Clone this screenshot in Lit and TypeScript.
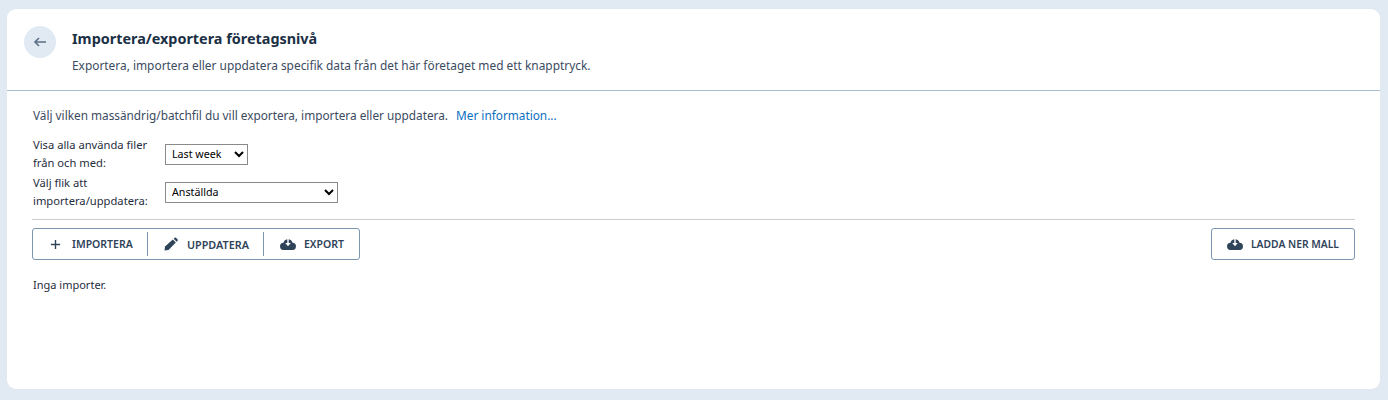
import { LitElement, html, css } from "lit";

const cloudIcon = html`
  <svg class="icon" viewBox="0 0 16 12" aria-hidden="true">
    <path d="M3.800 12a3.600 3.600 0 0 1-.3-7.200 4.600 4.600 0 0 1 9 0 3.600 3.600 0 0 1-.3 7.200z"></path>
    <path class="cut" d="M7.300 0h1.400v5h2.100L8 8.200 5.200 5h2.100z"></path>
  </svg>
`;

const pencilIcon = html`
  <svg class="icon pencil" viewBox="0 0 14 14" aria-hidden="true">
    <path d="M8.800 2.600l3 3L4.500 13l-4 .5.5-4z"></path>
    <path d="M9.700 1.700l.9-.9a1 1 0 0 1 1.400 0l1.600 1.600a1 1 0 0 1 0 1.400l-.9.9z"></path>
  </svg>
`;

const plusIcon = html`
  <svg class="icon plus" viewBox="0 0 12 12" aria-hidden="true">
    <path d="M6 1v10M1 6h10"></path>
  </svg>
`;

export class AppRoot extends LitElement {
  static styles = css`
    :host {
      display: block;
      background: #e1e9f3;
      padding: 9px 8px 11px 7px;
      font-family: "Noto Sans", "Open Sans", sans-serif;
      color: #3b4b5f;
    }
    .card {
      background: #fff;
      border-radius: 9px;
      height: 380px;
    }
    header {
      display: flex;
      gap: 16px;
      height: 82px;
      padding: 17px 0 0 17px;
      box-sizing: border-box;
      border-bottom: 1px solid #a9bccf;
    }
    .back {
      width: 32px;
      height: 32px;
      border-radius: 50%;
      background: #e1e9f3;
      display: flex;
      align-items: center;
      justify-content: center;
    }
    .back svg {
      width: 14px;
      height: 12px;
      fill: none;
      stroke: #5a6f87;
      stroke-width: 1.6;
    }
    h1 {
      margin: 1px 0 0;
      font-size: 14.4px;
      line-height: 24px;
      font-weight: 700;
      color: #1b2f45;
    }
    .sub {
      margin: 5px 0 0;
      font-size: 11.9px;
      line-height: 18px;
    }
    .content {
      padding: 15px 25px 0 26px;
    }
    .intro {
      margin: 0;
      font-size: 11.8px;
      line-height: 18px;
    }
    .intro a {
      color: #0b6fc2;
      text-decoration: none;
      margin-left: 5px;
    }
    .form {
      display: grid;
      grid-template-columns: 132px auto;
      justify-content: start;
      align-items: center;
      row-gap: 2px;
      margin-top: 12px;
      font-size: 11.2px;
      line-height: 18px;
      color: #1f2d3d;
    }
    select {
      font-family: inherit;
      font-size: 10.7px;
      height: 21px;
      background: #fff;
      border: 1px solid #8a8a8a;
      color: #000;
      padding: 0 2px;
      border-radius: 0;
      justify-self: start;
    }
    .week {
      width: 83px;
    }
    .tab {
      width: 173px;
    }
    .toolbar {
      display: flex;
      justify-content: space-between;
      border-top: 1px solid #cccccc;
      margin: 9px 0 0 -1px;
      padding-top: 8px;
    }
    .group,
    .single {
      display: flex;
      align-items: center;
      height: 32px;
      box-sizing: border-box;
      border: 1px solid #7d97ae;
      border-radius: 3px;
      background: #fff;
    }
    button {
      display: flex;
      align-items: center;
      height: 24px;
      padding: 0 0 0 16px;
      border: 0;
      background: none;
      font-family: inherit;
      font-size: 10.5px;
      font-weight: 600;
      color: #2f4359;
    }
    .group button + button {
      border-left: 1px solid #7d97ae;
    }
    .import {
      width: 114px;
      padding-left: 17px;
      gap: 11px;
    }
    .update {
      width: 116px;
      gap: 9px;
      font-size: 10.8px;
    }
    .export {
      width: 96px;
      gap: 8px;
    }
    .single {
      width: 144px;
    }
    .single button {
      height: 100%;
      padding-left: 15px;
      gap: 8px;
      font-size: 10.3px;
    }
    .icon {
      width: 16px;
      height: 12px;
      fill: #2f4359;
    }
    .cut {
      fill: #fff;
    }
    .pencil {
      width: 14px;
      height: 14px;
    }
    .plus {
      width: 11px;
      height: 11px;
      fill: none;
      stroke: #2f4359;
      stroke-width: 1.5;
    }
    .empty {
      margin: 16px 0 0;
      font-size: 11px;
      line-height: 18px;
      color: #1f2d3d;
    }
  `;

  render() {
    return html`
      <div class="card">
        <header>
          <div class="back">
            <svg viewBox="0 0 14 12" aria-hidden="true"><path d="M13 6H2M6 2 2 6l4 4"></path></svg>
          </div>
          <div>
            <h1>Importera/exportera företagsnivå</h1>
            <p class="sub">Exportera, importera eller uppdatera specifik data från det här företaget med ett knapptryck.</p>
          </div>
        </header>
        <div class="content">
          <p class="intro">
            Välj vilken massändrig/batchfil du vill exportera, importera eller uppdatera.
            <a href="#">Mer information...</a>
          </p>
          <div class="form">
            <label>Visa alla använda filer<br />från och med:</label>
            <select class="week"><option>Last week</option></select>
            <label>Välj flik att<br />importera/uppdatera:</label>
            <select class="tab"><option>Anställda</option></select>
          </div>
          <div class="toolbar">
            <div class="group">
              <button class="import">${plusIcon}IMPORTERA</button>
              <button class="update">${pencilIcon}UPPDATERA</button>
              <button class="export">${cloudIcon}EXPORT</button>
            </div>
            <div class="single">
              <button>${cloudIcon}LADDA NER MALL</button>
            </div>
          </div>
          <p class="empty">Inga importer.</p>
        </div>
      </div>
    `;
  }
}

customElements.define("app-root", AppRoot);
